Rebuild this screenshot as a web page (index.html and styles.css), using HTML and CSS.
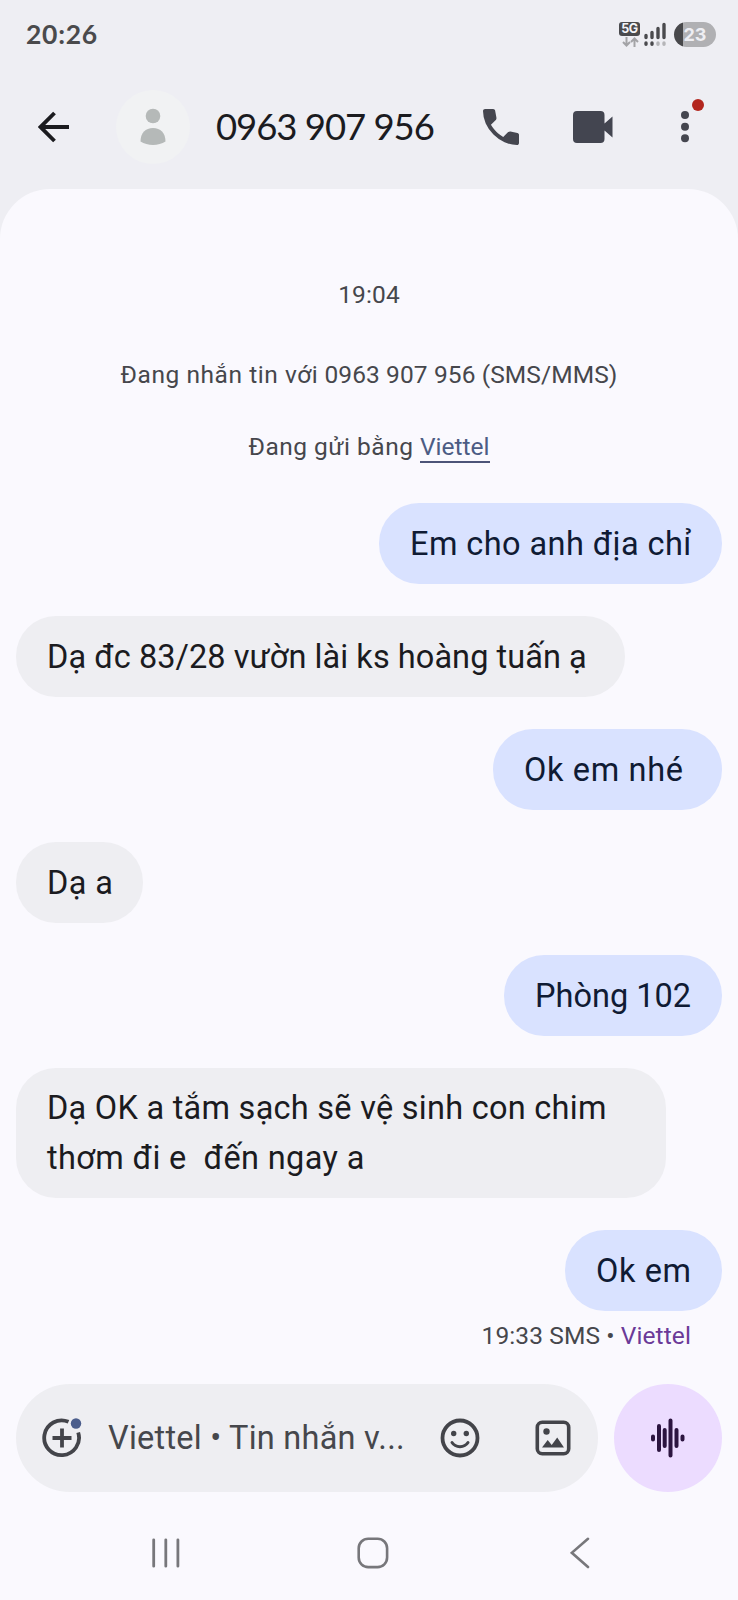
FILE: index.html
```html
<!DOCTYPE html>
<html lang="vi">
<head>
<meta charset="utf-8">
<title>0963 907 956</title>
<link rel="stylesheet" href="styles.css">
</head>
<body>
<div class="screen">
  <header class="top">
    <div class="status">
      <span class="clock">20:26</span>
      <div class="indicators">
        <div class="net">
          <span class="badge-5g">5G</span>
          <svg class="arrows" width="18" height="10" viewBox="0 0 18 10" fill="none" stroke="#a3a3a6" stroke-width="2"><path d="M5.500 0v8M2 5l3.500 3.500L9 5M13.500 10V2M10 5l3.500-3.500L17 5"/></svg>
        </div>
        <svg class="signal" width="24" height="25" viewBox="0 0 24 25" stroke="#4a4a4d" stroke-width="3.400" stroke-linecap="round"><path d="M3 13.500v2M9 10.500v5M15 6.500v9M21 2.500v13M3 21v1.200M9 21v1.200"/><path stroke="#b5b5b8" d="M15 21v1.200M21 21v1.200"/></svg>
        <div class="battery"><span class="battery-text">23</span></div>
      </div>
    </div>
    <div class="bar">
      <svg class="back" width="32" height="32" viewBox="0 0 32 32" fill="none" stroke="#1b1b1f" stroke-width="3.900"><path d="M31 16H3M16.500 2L2.600 16l13.900 14"/></svg>
      <div class="avatar"><svg width="26" height="38" viewBox="0 0 26 38" fill="#b5b9b8"><circle cx="13" cy="8" r="7.300"/><path d="M.5 33.500C.5 25 5.500 20 13 20s12.500 5 12.500 13.500C22 35.800 17.500 37 13 37S4 35.800.5 33.500z"/></svg></div>
      <h1 class="title">0963 907 956</h1>
      <svg class="call" width="36" height="36" viewBox="3 3 18 18" fill="#45464f"><path d="M19.950 21q-3.125 0-6.175-1.362t-5.550-3.863-3.862-5.550T3 4.050q0-.45.300-.75t.750-.3H8.100q.350 0 .625.238t.325.562l.650 3.500q.050.400-.025.675T9.400 8.450L6.975 10.900q.500.925 1.187 1.787t1.513 1.663q.775.775 1.625 1.438T13.100 17l2.350-2.350q.225-.225.588-.337t.712-.063l3.450.700q.350.100.575.363T21 15.900v4.050q0 .450-.300.750t-.750.300z"/></svg>
      <svg class="video" width="40" height="32" viewBox="0 0 40 32" fill="#434550"><path d="M4 0h23.500a4 4 0 0 1 4 4v8.500L39.500 5.500v21l-8-7V28a4 4 0 0 1-4 4H4a4 4 0 0 1-4-4V4a4 4 0 0 1 4-4z"/></svg>
      <div class="more"><svg width="8" height="32" viewBox="0 0 8 32" fill="#45464f"><circle cx="4" cy="4" r="4"/><circle cx="4" cy="15.700" r="4"/><circle cx="4" cy="27.300" r="4"/></svg><span class="alert"></span></div>
    </div>
  </header>

  <main class="thread">
    <p class="info time">19:04</p>
    <p class="info via"><span class="lead">Đang nhắn tin với</span> 0963 907 956 (SMS/MMS)</p>
    <p class="info carrier">Đang gửi bằng <a class="link">Viettel</a></p>

    <div class="messages">
      <div class="bubble out w-ask"><span>Em cho anh địa chỉ</span></div>
      <div class="bubble in w-address"><span>Dạ đc 83/28 vườn lài ks hoàng tuấn ạ</span></div>
      <div class="bubble out w-ok"><span>Ok em nhé</span></div>
      <div class="bubble in w-yes"><span>Dạ a</span></div>
      <div class="bubble out w-room"><span>Phòng 102</span></div>
      <div class="bubble in w-long"><span class="line-a">Dạ OK a tắm sạch sẽ vệ sinh con chim</span><br><span class="line-b">thơm đi e&nbsp; đến ngay a</span></div>
      <div class="bubble out w-last"><span>Ok em</span></div>
    </div>
    <p class="meta">19:33 SMS • <span class="sim">Viettel</span></p>

    <div class="composer">
      <div class="field">
        <svg class="add" width="42" height="42" viewBox="0 0 42 42" fill="none" stroke="#43444a" stroke-width="3.800"><path d="M27.500 4.800A17.400 17.400 0 1 0 37.200 15.500M21 11.500v19M11.500 21h19"/><circle cx="35" cy="6.500" r="5.200" fill="#4b5d8c" stroke="none"/></svg>
        <span class="placeholder">Viettel • Tin nhắn v...</span>
        <svg class="emoji" width="40" height="40" viewBox="0 0 40 40" fill="none" stroke="#43444a" stroke-width="3.800"><circle cx="20" cy="20" r="17.500"/><path stroke-width="3" stroke-linecap="round" d="M12 24.500c3.500 5.500 12.500 5.500 16 0"/><g fill="#43444a" stroke="none"><circle cx="13.700" cy="15.500" r="2.700"/><circle cx="26.300" cy="15.500" r="2.700"/></g></svg>
        <svg class="image" width="36" height="36" viewBox="0 0 36 36" fill="none" stroke="#43444a" stroke-width="3.600"><rect x="2.300" y="2.300" width="31.400" height="31.400" rx="5"/><g fill="#43444a" stroke="none"><circle cx="11.500" cy="11.500" r="3.200"/><path d="M7 27.500l5.700-7.500 4 5 5.500-7.500L29 27.500z"/></g></svg>
      </div>
      <div class="voice"><svg width="36" height="40" viewBox="0 0 36 40" stroke="#2c1540" stroke-width="4" stroke-linecap="round"><path d="M3 18.500v3M9 8v24M14.700 12v16M20.500 2.500v35M26.500 12v16M32.500 18.500v3"/></svg></div>
    </div>

    <nav class="nav" aria-label="system">
      <svg width="28" height="30" viewBox="0 0 28 30" stroke="#77777b" stroke-width="2.800" stroke-linecap="round"><path d="M1.700 1.800v26.400M13.800 1.800v26.400M25.900 1.800v26.400"/></svg>
      <svg width="32" height="32" viewBox="0 0 32 32" fill="none" stroke="#77777b" stroke-width="2.600"><rect x="1.700" y="1.700" width="28.400" height="28.400" rx="9.500"/></svg>
      <svg width="20" height="32" viewBox="0 0 20 32" fill="none" stroke="#77777b" stroke-width="2.600" stroke-linecap="round"><path d="M18 1.800L1.800 15.800 18 30"/></svg>
    </nav>
  </main>
</div>
</body>
</html>
```
FILE: styles.css
```css
* { box-sizing: border-box; }
body { margin: 0; font-family: Roboto, "Noto Sans", sans-serif; background: #eeeef3; }
p, h1 { margin: 0; font-weight: 400; }
svg { display: block; flex: none; }
.screen { width: 738px; height: 1600px; display: flex; flex-direction: column; background: #eeeef3; }

.top { height: 189px; flex: none; }
.status { height: 69px; padding: 0 22px 0 26px; display: flex; align-items: center; justify-content: space-between; }
.clock { font: 700 26.500px/30px Lato, sans-serif; letter-spacing: .7px; color: #4a4a4c; padding-bottom: 1px; }
.indicators { display: flex; align-items: flex-start; height: 25px; }
.net { width: 21px; display: flex; flex-direction: column; align-items: center; gap: 1px; }
.badge-5g { width: 21px; height: 14px; border-radius: 3px; background: #4a4a4d; color: #f4f4f8; font: 700 12.500px/14px Inter, sans-serif; letter-spacing: -.4px; text-align: center; }
.signal { margin: 0 7px 0 3px; }
.battery { width: 42px; height: 25px; border-radius: 13px; background: linear-gradient(90deg, #48484b 9px, #b0b0b3 9px); display: flex; justify-content: center; }
.battery-text { font: 700 18px/25px Inter, sans-serif; color: #eeeef3; }

.bar { display: flex; align-items: center; height: 115px; padding-left: 38px; }
.avatar { width: 74px; height: 74px; margin-left: 46px; border-radius: 50%; background: #f1f2f3; display: flex; align-items: center; justify-content: center; }
.title { width: 217px; margin-left: 26px; font: 400 36.500px/46px Lato, sans-serif; padding-bottom: 2px; color: #1b1b1f; white-space: nowrap; letter-spacing: -1.050px; }
.call { margin-left: 50px; }
.video { margin-left: 54px; }
.more { position: relative; margin-left: 68px; }
.alert { position: absolute; left: 11px; top: -12px; width: 12px; height: 12px; border-radius: 50%; background: #b3261e; }

.thread { flex: 1; background: #faf9fe; border-radius: 50px 50px 0 0; padding: 89px 16px 0; display: flex; flex-direction: column; }
.info { font-size: 24.500px; line-height: 34px; letter-spacing: .1px; color: #46474c; text-align: center; white-space: nowrap; }
.via { margin-top: 46px; }
.lead { letter-spacing: .55px; }
.carrier { margin-top: 38px; letter-spacing: .5px; }
.link { color: #4c5c84; border-bottom: 2px solid #4c5478; letter-spacing: 0; }

.messages { margin-top: 39px; display: flex; flex-direction: column; gap: 32px; }
.bubble { padding: 17px 0 15px 31px; border-radius: 40px; font-size: 32.500px; line-height: 49px; white-space: nowrap; }
.out { align-self: flex-end; background: #d9e2ff; color: #101b34; }
.in { align-self: flex-start; background: #eeeef2; color: #1b1b1f; }
.w-ask { width: 343px; letter-spacing: .42px; }
.w-address { width: 609px; letter-spacing: .06px; }
.w-ok { width: 229px; letter-spacing: .65px; }
.w-yes { width: 127px; letter-spacing: .4px; }
.w-room { width: 218px; }
.w-long { width: 650px; line-height: 49.500px; padding: 16px 0 15px 31px; }
.line-a { letter-spacing: .26px; }
.line-b { letter-spacing: .38px; }
.w-last { width: 157px; letter-spacing: .6px; }

.meta { margin: 8px 31px 0 0; text-align: right; font-size: 24.500px; line-height: 34px; letter-spacing: .1px; color: #46474c; white-space: nowrap; }
.sim { color: #6b3a98; }

.composer { margin-top: 31px; display: flex; gap: 16px; }
.field { width: 582px; height: 108px; border-radius: 54px; background: #eeeef2; display: flex; align-items: center; padding-left: 25px; }
.placeholder { width: 294px; margin-left: 25px; font-size: 32.500px; line-height: 48px; letter-spacing: .24px; color: #46474c; white-space: nowrap; }
.emoji { margin-left: 38px; }
.image { margin-left: 55px; }
.voice { width: 108px; height: 108px; border-radius: 50%; background: #ecdcff; display: flex; align-items: center; justify-content: center; }

.nav { margin-top: 45px; padding-left: 136px; display: flex; align-items: center; height: 32px; }
.nav svg + svg { margin-left: 177px; }
.nav svg:last-child { margin-left: 181px; }
```
